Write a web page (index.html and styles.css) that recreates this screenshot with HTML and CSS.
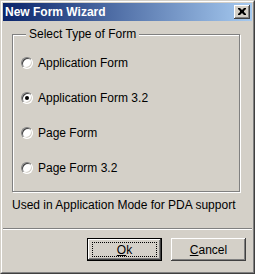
FILE: index.html
```html
<!DOCTYPE html>
<html>
  <head>
    <title>New Form Wizard</title>
    <link rel="stylesheet" href="styles.css">
  </head>
  <body>
    <div class='window'>
      <div class='frame'>
        <div class='titlebar'>
          <span class='title'>New Form Wizard</span>
          <span class='close-button'>
            <svg width='8' height='7' viewBox='0 0 8 7'>
              <path d='M0 0h2l2 2 2-2h2v1l-2 2v1l2 2v1h-2l-2-2-2 2h-2v-1l2-2v-1l-2-2z' fill='#000'/>
            </svg>
          </span>
        </div>

        <div class='client'>
          <fieldset class='group'>
            <legend>Select Type of Form</legend>
            <label class='option'><span class='radio'></span>Application Form</label>
            <label class='option'><span class='radio checked'></span>Application Form 3.2</label>
            <label class='option'><span class='radio'></span>Page Form</label>
            <label class='option'><span class='radio'></span>Page Form 3.2</label>
          </fieldset>

          <p class='hint'>Used in Application Mode for PDA support</p>

          <div class='separator'></div>

          <div class='buttons'>
            <div class='button default'><span class='focus'><u>O</u>k</span></div>
            <div class='button'><span><u>C</u>ancel</span></div>
          </div>
        </div>
      </div>
    </div>
  </body>
</html>
```

FILE: styles.css
```css
* {box-sizing: border-box;}

html, body {
  margin: 0;
  background-color: #d4d0c8;
}

body {
  font-family: "Liberation Sans", Arial, sans-serif;
  font-size: 12px;
  color: #000;
}

.window {
  width: 255px;
  height: 274px;
  border: 1px solid;
  border-color: #d4d0c8 #404040 #404040 #d4d0c8;
}

.frame {
  height: 100%;
  border: 1px solid;
  border-color: #fff #808080 #808080 #fff;
  padding: 1px;
  display: flex;
  flex-direction: column;
}

.titlebar {
  height: 18px;
  display: flex;
  align-items: center;
  justify-content: space-between;
  padding: 0 2px 0 2px;
  background: linear-gradient(to right, #0a246a, #a6caf0);
}

.title {
  color: #fff;
  font-weight: bold;
  font-size: 12px;
  font-family: "Liberation Sans", Arial, sans-serif;
}

.close-button {
  width: 16px;
  height: 14px;
  display: flex;
  align-items: center;
  justify-content: center;
  background-color: #d4d0c8;
  box-shadow: inset -1px -1px #404040, inset 1px 1px #fff, inset -2px -2px #808080;
  padding-bottom: 1px;
}

.client {
  flex: 1;
  display: flex;
  flex-direction: column;
  padding-top: 1px;
}

.group {
  margin: 5px 12px 0 9px;
  padding: 4px 0 6px 8px;
  border: 1px solid #808080;
  box-shadow: inset 1px 1px #fff, 1px 1px #fff;
  display: flex;
  flex-direction: column;
}

.group legend {
  padding: 0 3px;
  margin-left: 5px;
  line-height: 14px;
  background-color: #d4d0c8;
}

.option {
  height: 35px;
  display: flex;
  align-items: center;
  gap: 5px;
}

.radio {
  width: 12px;
  height: 12px;
  border-radius: 50%;
  background-color: #fff;
  border: 1px solid;
  border-color: #808080 #fff #fff #808080;
  box-shadow: inset 1px 1px #404040, inset -1px -1px #d4d0c8;
  display: flex;
  align-items: center;
  justify-content: center;
}

.radio.checked::after {
  content: '';
  width: 4px;
  height: 4px;
  border-radius: 50%;
  background-color: #000;
}

.hint {
  margin: 6px 0 0 9px;
  line-height: 14px;
}

.separator {
  margin-top: 16px;
  height: 2px;
  border-top: 1px solid #808080;
  border-bottom: 1px solid #fff;
}

.buttons {
  display: flex;
  justify-content: flex-end;
  gap: 9px;
  padding: 8px 6px 0 0;
}

.button {
  width: 75px;
  height: 23px;
  display: flex;
  align-items: center;
  justify-content: center;
  background-color: #d4d0c8;
  box-shadow: inset -1px -1px #404040, inset 1px 1px #fff, inset -2px -2px #808080;
}

.button.default {
  border: 1px solid #000;
}

.button .focus {
  width: 65px;
  height: 15px;
  border: 1px dotted #000;
  display: flex;
  align-items: center;
  justify-content: center;
}
```
